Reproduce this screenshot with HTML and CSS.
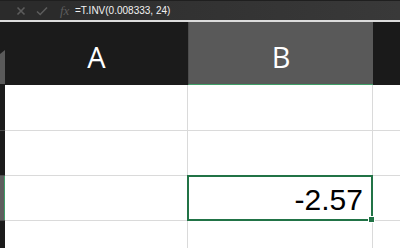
FILE: index.html
```html
<!DOCTYPE html>
<html lang="en">
<head>
    <meta charset="UTF-8">
    <title>T.INV</title>
    <link rel="stylesheet" href="styles.css">
</head>
<body>
    <div class="formula-bar">
        <div class="fb-icons">
            <svg class="fb-icon" width="10" height="10" viewBox="0 0 10 10"><path d="M1.5 1.5 L8.5 8.5 M8.5 1.5 L1.5 8.5" stroke="#5c5c5c" stroke-width="1.6" fill="none"/></svg>
            <svg class="fb-icon" width="12" height="10" viewBox="0 0 12 10"><path d="M1 5.5 L4.2 8.5 L11 1.5" stroke="#5c5c5c" stroke-width="1.6" fill="none"/></svg>
            <span class="fx">fx</span>
        </div>
        <div class="fb-input">=T.INV(0.008333, 24)</div>
    </div>

    <div class="sheet">
        <div class="corner"><span class="corner-tri"></span></div>
        <div class="col-head">A</div>
        <div class="col-head active">B</div>
        <div class="col-head rest"></div>

        <div class="row-head"></div>
        <div class="cell"></div>
        <div class="cell"></div>
        <div class="cell last"></div>

        <div class="row-head"></div>
        <div class="cell"></div>
        <div class="cell"></div>
        <div class="cell last"></div>

        <div class="row-head active"></div>
        <div class="cell"></div>
        <div class="cell selected">-2.57<span class="handle"></span></div>
        <div class="cell last"></div>

        <div class="row-head"></div>
        <div class="cell"></div>
        <div class="cell"></div>
        <div class="cell last"></div>
    </div>
</body>
</html>
```

FILE: styles.css
```css
body {
    margin: 0;
    width: 400px;
    height: 248px;
    overflow: hidden;
    background: #fff;
    font-family: "Liberation Sans", Arial, sans-serif;
}
.formula-bar {
    display: flex;
    height: 19px;
    border-top: 1px solid #1f1f1f;
    border-bottom: 2px solid #dcdcdc;
    background: #353535;
}
.fb-icons {
    display: flex;
    align-items: center;
    gap: 10px;
    width: 70px;
    padding-left: 16px;
    box-sizing: border-box;
    background: #2b2b2b;
}
.fb-icon {
    display: block;
}
.fx {
    font-family: "Liberation Serif", serif;
    font-style: italic;
    font-size: 13px;
    color: #5c5c5c;
    margin-left: 2px;
}
.fb-input {
    display: flex;
    align-items: center;
    padding-left: 5px;
    font-size: 10px;
    color: #f2f2f2;
    background: linear-gradient(to right, #2e2e2e, #393939);
    flex: 1;
}
.sheet {
    display: grid;
    grid-template-columns: 5px 183px 185px 27px;
    grid-template-rows: 63px 46px 45px 45px 28px;
}
.corner {
    background: #1b1b1b;
    border-bottom: 1px solid #1b1b1b;
    display: flex;
    align-items: flex-end;
}
.corner-tri {
    display: block;
    width: 5px;
    height: 34px;
    background: #5a5a5a;
    clip-path: polygon(0 4px, 100% 0, 100% 100%, 0 100%);
}
.col-head {
    display: flex;
    align-items: center;
    justify-content: center;
    background: #1b1b1b;
    color: #fff;
    font-family: "Open Sans", sans-serif;
    font-size: 29px;
    border-bottom: 1px solid #1b1b1b;
    padding-top: 6px;
    box-sizing: border-box;
}
.col-head.active {
    background: #595959;
    border-left: 1px solid #4c4c4c;
    border-bottom: 1px solid #3f9d67;
}
.col-head.rest {
    background: #1a1a1a;
}
.row-head {
    background: #1b1b1b;
    border-bottom: 1px solid #4a4a4a;
}
.row-head.active {
    background: #5e5e5e;
    box-shadow: inset -1px 0 0 #3f9d67;
}
.cell {
    border-right: 1px solid #dadada;
    border-bottom: 1px solid #dadada;
}
.cell.last {
    border-right: none;
}
.cell.selected {
    position: relative;
    display: flex;
    align-items: flex-end;
    justify-content: flex-end;
    padding: 0 8px 4px 0;
    margin: -1px 0 0 -1px;
    border: 2px solid #217346;
    font-family: "Liberation Sans", sans-serif;
    font-size: 30px;
    color: #000;
    line-height: 1;
}
.handle {
    position: absolute;
    right: -4px;
    bottom: -4px;
    width: 5px;
    height: 5px;
    background: #217346;
    border: 1px solid #fff;
}
```
